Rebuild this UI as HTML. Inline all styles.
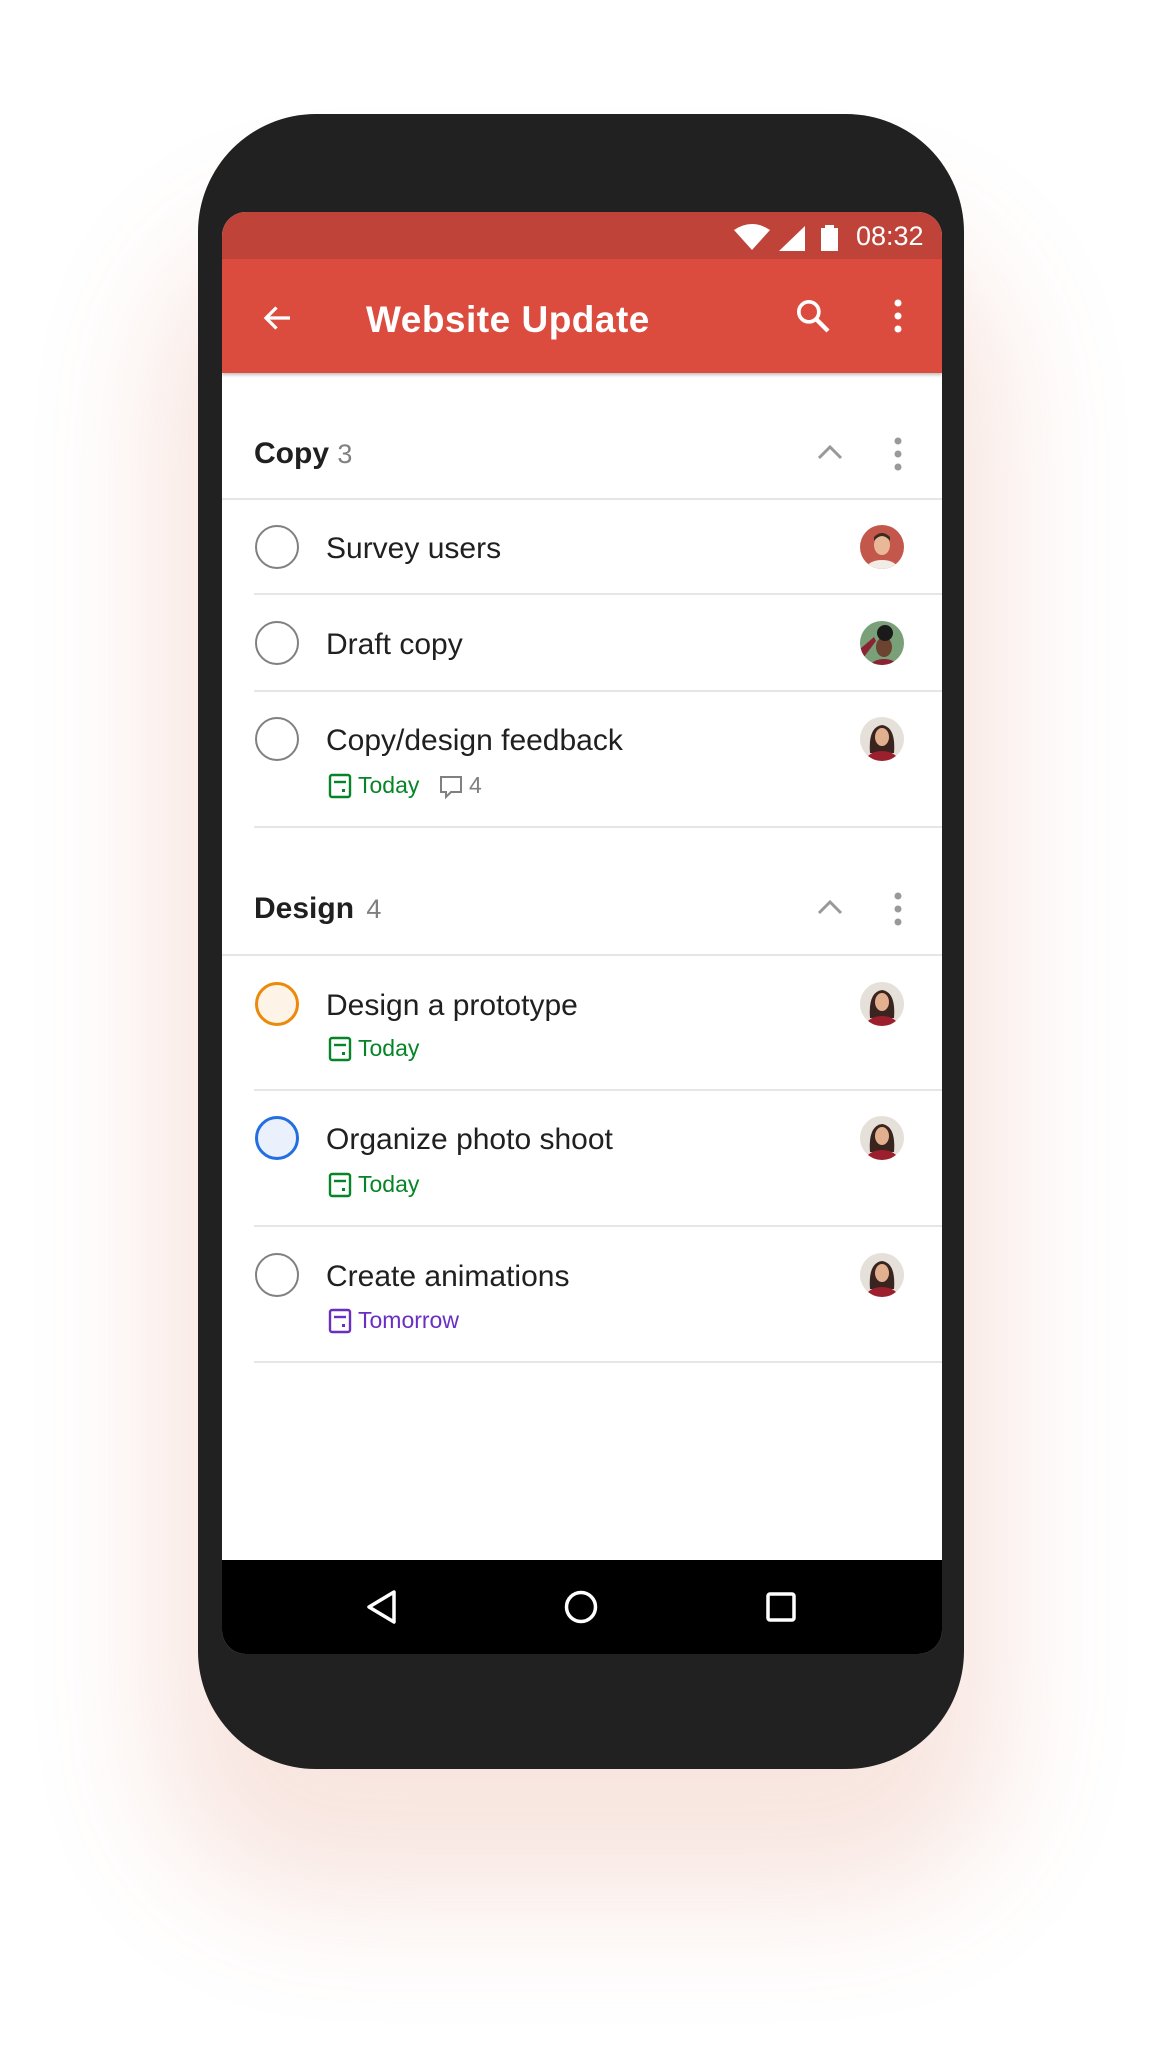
<!DOCTYPE html>
<html><head><meta charset="utf-8"><style>
*{margin:0;padding:0;box-sizing:border-box}
html,body{width:1162px;height:2052px;background:#fff;overflow:hidden;font-family:"Liberation Sans",sans-serif;position:relative}
.glow{position:absolute;left:198px;top:180px;width:766px;height:1589px;border-radius:120px;box-shadow:0 90px 170px 40px rgba(214,110,80,0.18)}
.phone{position:absolute;left:198px;top:114px;width:766px;height:1655px;border-radius:118px;background:#212121}
.screen{position:absolute;left:222px;top:212px;width:720px;height:1442px;border-radius:24px;background:#fff;overflow:hidden}
.status{position:absolute;left:0;top:0;width:720px;height:47px;background:#c0433a}
.appbar{position:absolute;left:0;top:47px;width:720px;height:114px;background:#db4c3f;box-shadow:0 2px 3px rgba(0,0,0,0.25)}
.abs{position:absolute}
.t{position:absolute;white-space:nowrap}
.div{position:absolute;height:2px;background:#e6e6e6}
.circ{position:absolute;width:44px;height:44px;border-radius:50%;border:2px solid #808080}
.task{font-size:30px;color:#202020;margin-top:3px}
.meta{font-size:23px;color:#058527;margin-top:3px}
.av{position:absolute;width:44px;height:44px;border-radius:50%;overflow:hidden}
.nav{position:absolute;left:0;top:1348px;width:720px;height:94px;background:#000}
</style></head><body>
<div class="glow"></div>
<div class="phone"></div>
<div class="screen">
 <div class="status"></div>
 <svg class="abs" style="left:510px;top:12px" width="200" height="30" viewBox="0 0 200 30">
  <path d="M20 26 L2 6 Q20 -6 38 6 Z" fill="#fff"/>
  <path d="M47 27 L73 2 L73 27 Z" fill="#fff"/>
  <rect x="89" y="4" width="17" height="23" fill="#fff"/><rect x="93" y="1" width="9" height="4" fill="#fff"/>
 </svg>
 <div class="t" style="left:634px;top:9px;font-size:27px;color:#fff">08:32</div>
 <div class="appbar"></div>
 <svg class="abs" style="left:38px;top:88px" width="36" height="36" viewBox="0 0 24 24"><path d="M20 12H5M11 5l-7 7 7 7" stroke="#fff" stroke-width="2.2" fill="none"/></svg>
 <div class="t" style="left:144px;top:87px;font-size:37px;color:#fff;font-weight:bold;letter-spacing:0.5px">Website Update</div>
 <svg class="abs" style="left:571px;top:84px" width="40" height="40" viewBox="0 0 24 24"><circle cx="9.5" cy="9.5" r="6" stroke="#fff" stroke-width="2.2" fill="none"/><path d="M14 14l7 7" stroke="#fff" stroke-width="2.6"/></svg>
 <svg class="abs" style="left:664px;top:86px" width="24" height="36" viewBox="0 0 24 36"><circle cx="12" cy="5" r="3.5" fill="#fff"/><circle cx="12" cy="18" r="3.5" fill="#fff"/><circle cx="12" cy="31" r="3.5" fill="#fff"/></svg>

 <div class="t" style="left:32px;top:225px;font-size:30px;font-weight:bold;color:#202020">Copy <span style="font-weight:normal;color:#808080;font-size:27px">3</span></div>
 <svg class="abs" style="left:594px;top:230px" width="28" height="20" viewBox="0 0 28 20"><path d="M3 16 L14 5 L25 16" stroke="#999" stroke-width="3" fill="none"/></svg>
 <svg class="abs" style="left:664px;top:224px" width="24" height="36" viewBox="0 0 24 36"><circle cx="12" cy="5" r="3.5" fill="#999"/><circle cx="12" cy="18" r="3.5" fill="#999"/><circle cx="12" cy="31" r="3.5" fill="#999"/></svg>
 <div class="div" style="left:0;top:286px;width:720px"></div>

 <div class="circ" style="left:33px;top:313px"></div>
 <div class="t task" style="left:104px;top:317px">Survey users</div>
 <svg class="av" style="left:638px;top:313px" viewBox="0 0 44 44"><rect width="44" height="44" fill="#c4574b"/><ellipse cx="22" cy="44" rx="16" ry="9" fill="#f2ece6"/><ellipse cx="22" cy="20" rx="8" ry="10" fill="#e8b898"/><path d="M14 16 Q22 6 30 16 L30 12 Q22 4 14 12Z" fill="#3a2a20"/></svg>
 <div class="div" style="left:32px;top:381px;width:688px"></div>

 <div class="circ" style="left:33px;top:409px"></div>
 <div class="t task" style="left:104px;top:413px">Draft copy</div>
 <svg class="av" style="left:638px;top:409px" viewBox="0 0 44 44"><rect width="44" height="44" fill="#7aa079"/><ellipse cx="24" cy="26" rx="8" ry="10" fill="#6b4330"/><circle cx="25" cy="12" r="8" fill="#1a1a1a"/><path d="M0 28 L14 16 L16 20 L4 36Z" fill="#8a2433"/><ellipse cx="24" cy="46" rx="14" ry="8" fill="#8a2433"/></svg>
 <div class="div" style="left:32px;top:478px;width:688px"></div>

 <div class="circ" style="left:33px;top:505px"></div>
 <div class="t task" style="left:104px;top:509px">Copy/design feedback</div>
 <svg class="abs" style="left:106px;top:561px" width="24" height="26" viewBox="0 0 24 26"><rect x="2" y="2" width="20" height="22" rx="2" stroke="#058527" stroke-width="2.4" fill="none"/><path d="M6 9h12" stroke="#058527" stroke-width="2.4"/><rect x="14" y="16" width="3" height="3" fill="#058527"/></svg>
 <div class="t meta" style="left:136px;top:557px">Today</div>
 <svg class="abs" style="left:216px;top:562px" width="26" height="26" viewBox="0 0 26 26"><path d="M3 3h20v15H13l-5 5v-5H3z" stroke="#808080" stroke-width="2" fill="none"/></svg>
 <div class="t meta" style="left:247px;top:557px;color:#808080">4</div>
 <svg class="av" style="left:638px;top:505px" viewBox="0 0 44 44"><rect width="44" height="44" fill="#e6e0da"/><path d="M10 36 Q8 10 22 8 Q36 10 34 36Z" fill="#3a2420"/><ellipse cx="22" cy="20" rx="7" ry="9" fill="#e3b08f"/><ellipse cx="22" cy="44" rx="16" ry="10" fill="#9c1f2e"/></svg>
 <div class="div" style="left:32px;top:614px;width:688px"></div>

 <div class="t" style="left:32px;top:680px;font-size:30px;font-weight:bold;color:#202020">Design <span style="font-weight:normal;color:#808080;font-size:27px;margin-left:4px">4</span></div>
 <svg class="abs" style="left:594px;top:685px" width="28" height="20" viewBox="0 0 28 20"><path d="M3 16 L14 5 L25 16" stroke="#999" stroke-width="3" fill="none"/></svg>
 <svg class="abs" style="left:664px;top:679px" width="24" height="36" viewBox="0 0 24 36"><circle cx="12" cy="5" r="3.5" fill="#999"/><circle cx="12" cy="18" r="3.5" fill="#999"/><circle cx="12" cy="31" r="3.5" fill="#999"/></svg>
 <div class="div" style="left:0;top:742px;width:720px"></div>

 <div class="circ" style="left:33px;top:770px;border:3px solid #eb8909;background:#fdf3e7"></div>
 <div class="t task" style="left:104px;top:774px">Design a prototype</div>
 <svg class="abs" style="left:106px;top:824px" width="24" height="26" viewBox="0 0 24 26"><rect x="2" y="2" width="20" height="22" rx="2" stroke="#058527" stroke-width="2.4" fill="none"/><path d="M6 9h12" stroke="#058527" stroke-width="2.4"/><rect x="14" y="16" width="3" height="3" fill="#058527"/></svg>
 <div class="t meta" style="left:136px;top:820px">Today</div>
 <svg class="av" style="left:638px;top:770px" viewBox="0 0 44 44"><rect width="44" height="44" fill="#e6e0da"/><path d="M10 36 Q8 10 22 8 Q36 10 34 36Z" fill="#3a2420"/><ellipse cx="22" cy="20" rx="7" ry="9" fill="#e3b08f"/><ellipse cx="22" cy="44" rx="16" ry="10" fill="#9c1f2e"/></svg>
 <div class="div" style="left:32px;top:877px;width:688px"></div>

 <div class="circ" style="left:33px;top:904px;border:3px solid #246fe0;background:#eaf1fc"></div>
 <div class="t task" style="left:104px;top:908px">Organize photo shoot</div>
 <svg class="abs" style="left:106px;top:960px" width="24" height="26" viewBox="0 0 24 26"><rect x="2" y="2" width="20" height="22" rx="2" stroke="#058527" stroke-width="2.4" fill="none"/><path d="M6 9h12" stroke="#058527" stroke-width="2.4"/><rect x="14" y="16" width="3" height="3" fill="#058527"/></svg>
 <div class="t meta" style="left:136px;top:956px">Today</div>
 <svg class="av" style="left:638px;top:904px" viewBox="0 0 44 44"><rect width="44" height="44" fill="#e6e0da"/><path d="M10 36 Q8 10 22 8 Q36 10 34 36Z" fill="#3a2420"/><ellipse cx="22" cy="20" rx="7" ry="9" fill="#e3b08f"/><ellipse cx="22" cy="44" rx="16" ry="10" fill="#9c1f2e"/></svg>
 <div class="div" style="left:32px;top:1013px;width:688px"></div>

 <div class="circ" style="left:33px;top:1041px"></div>
 <div class="t task" style="left:104px;top:1045px">Create animations</div>
 <svg class="abs" style="left:106px;top:1096px" width="24" height="26" viewBox="0 0 24 26"><rect x="2" y="2" width="20" height="22" rx="2" stroke="#692fc2" stroke-width="2.4" fill="none"/><path d="M6 9h12" stroke="#692fc2" stroke-width="2.4"/><rect x="14" y="16" width="3" height="3" fill="#692fc2"/></svg>
 <div class="t meta" style="left:136px;top:1092px;color:#692fc2">Tomorrow</div>
 <svg class="av" style="left:638px;top:1041px" viewBox="0 0 44 44"><rect width="44" height="44" fill="#e6e0da"/><path d="M10 36 Q8 10 22 8 Q36 10 34 36Z" fill="#3a2420"/><ellipse cx="22" cy="20" rx="7" ry="9" fill="#e3b08f"/><ellipse cx="22" cy="44" rx="16" ry="10" fill="#9c1f2e"/></svg>
 <div class="div" style="left:32px;top:1149px;width:688px"></div>

 <div class="nav">
  <svg class="abs" style="left:142px;top:28px" width="36" height="38" viewBox="0 0 36 38"><path d="M30 4 L5 19 L30 34 Z" stroke="#fff" stroke-width="3.5" fill="none" stroke-linejoin="round"/></svg>
  <svg class="abs" style="left:341px;top:29px" width="36" height="36" viewBox="0 0 36 36"><circle cx="18" cy="18" r="14.5" stroke="#fff" stroke-width="3.5" fill="none"/></svg>
  <svg class="abs" style="left:543px;top:31px" width="32" height="32" viewBox="0 0 32 32"><rect x="3" y="3" width="26" height="26" rx="2" stroke="#fff" stroke-width="3.5" fill="none"/></svg>
 </div>
</div>
</body></html>
